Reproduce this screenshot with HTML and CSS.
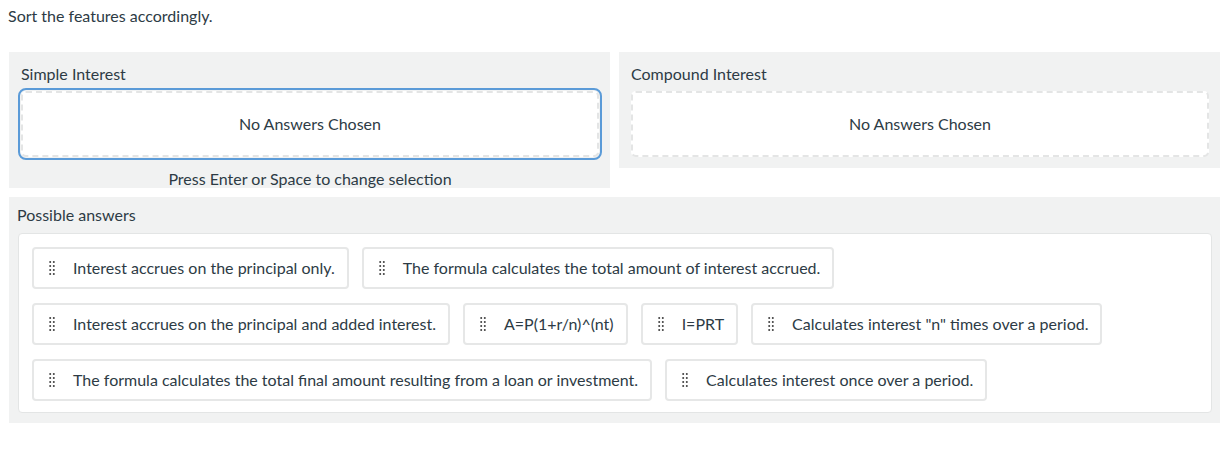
FILE: index.html
```html
<!DOCTYPE html>
<html lang="en">
<head>
  <meta charset="UTF-8">
  <title>Sort the features</title>
  <link rel="stylesheet" href="styles.css">
</head>
<body>

<p class="prompt">Sort the features accordingly.</p>

<div class="question">
  <!-- categories -->
  <div class="categories">
    <div class="category with-hint">
      <div class="category-label">Simple Interest</div>
      <div class="dropzone focused">No Answers Chosen</div>
      <div class="hint">Press Enter or Space to change selection</div>
    </div>
    <div class="category">
      <div class="category-label">Compound Interest</div>
      <div class="dropzone">No Answers Chosen</div>
    </div>
  </div>

  <!-- answer pool -->
  <div class="pool">
    <div class="category-label">Possible answers</div>
    <div class="pool-box">
      <div class="chip"><span class="handle"></span>Interest accrues on the principal only.</div>
      <div class="chip"><span class="handle"></span>The formula calculates the total amount of interest accrued.</div>
      <div class="chip"><span class="handle"></span>Interest accrues on the principal and added interest.</div>
      <div class="chip"><span class="handle"></span>A=P(1+r/n)^(nt)</div>
      <div class="chip"><span class="handle"></span>I=PRT</div>
      <div class="chip"><span class="handle"></span>Calculates interest "n" times over a period.</div>
      <div class="chip"><span class="handle"></span>The formula calculates the total final amount resulting from a loan or investment.</div>
      <div class="chip"><span class="handle"></span>Calculates interest once over a period.</div>
    </div>
  </div>
</div>

</body>
</html>
```

FILE: styles.css
```css
body {
  margin: 0;
  font-family: Lato, "Open Sans", sans-serif;
  font-size: 16px;
  color: #2d3b45;
  background: #fff;
}
.prompt {
  margin: 0;
  padding: 6px 8px;
  line-height: 20px;
}
.question {
  margin: 20px 8px 0 9px;
}
.categories {
  display: flex;
  gap: 9px;
  align-items: flex-start;
}
.category {
  flex: 1;
  background: #f1f2f2;
  padding: 12px 11px 11px 12px;
}
.category.with-hint {
  padding-bottom: 0;
}
.category-label {
  line-height: 20px;
  margin-bottom: 7px;
}
.dropzone {
  height: 60px;
  padding-bottom: 2px;
  border: 2px dashed #e4e5e5;
  border-radius: 5px;
  background: #fff;
  display: flex;
  align-items: center;
  justify-content: center;
}
.dropzone.focused {
  outline: 2px solid #5b9bd8;
  outline-offset: 1px;
}
.hint {
  text-align: center;
  line-height: 18px;
  margin-top: 13px;
}
.pool {
  margin-top: 9px;
  background: #f1f2f2;
  padding: 8px 8px 10px 9px;
}
.pool .category-label {
  margin-left: -1px;
  margin-bottom: 8px;
}
.pool-box {
  background: #fff;
  border: 1px solid #e3e5e5;
  border-radius: 4px;
  padding: 13px 13px 11px;
  display: flex;
  flex-wrap: wrap;
  gap: 14px 13px;
}
.chip {
  height: 37px;
  padding: 0 12px 1px 15px;
  border: 2px solid #e6e7e7;
  border-radius: 4px;
  display: flex;
  align-items: center;
  white-space: nowrap;
}
.handle {
  width: 6px;
  height: 15px;
  margin-right: 18px;
  background-image: radial-gradient(circle, #555 0.9px, transparent 1.1px);
  background-size: 3.5px 4px;
  background-position: -0.5px 0;
}
```
